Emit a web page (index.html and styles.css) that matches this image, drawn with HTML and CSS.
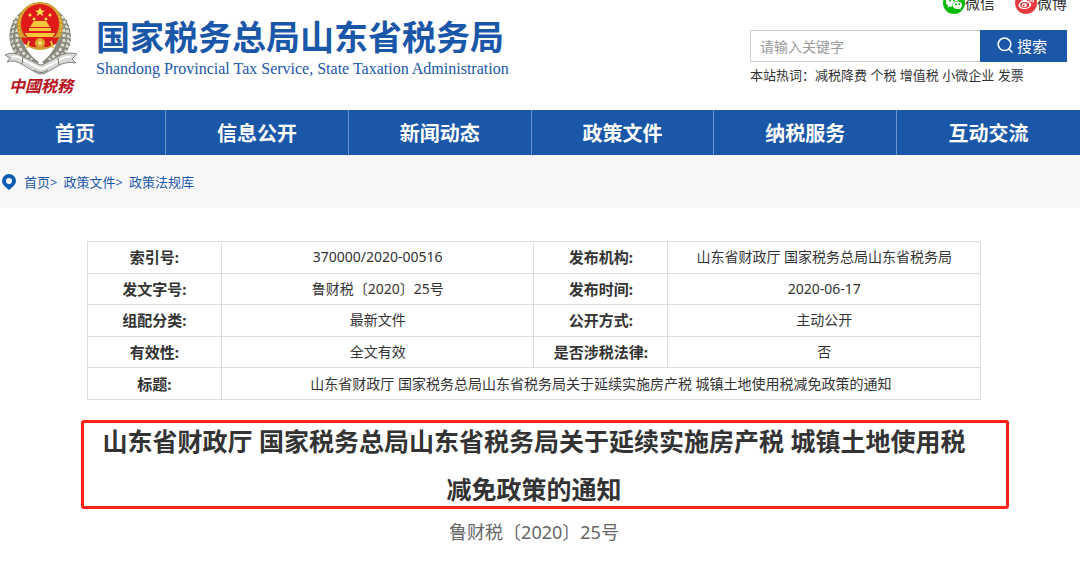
FILE: index.html
```html
<!DOCTYPE html>
<html lang="zh-CN">
<head>
    <meta charset="UTF-8">
    <meta name="viewport" content="width=device-width, initial-scale=1.0">
    <title>国家税务总局山东省税务局</title>
    <link rel="stylesheet" href="styles.css">
</head>
<body>
    <header class="header">
        <a class="brand" href="#">
            <span class="emblem">
                <svg class="emblem-img" viewBox="0 0 74 74" width="74" height="74" aria-hidden="true">
                    <!-- 麦穗 -->
                    <path d="M18 9C4 20 1 40 13 54L28 68L35 60C20 50 13 32 18 9Z" fill="#8b8a80"/>
                    <path d="M54 9C68 20 71 40 60 54L46 68L38 60C52 50 59 32 54 9Z" fill="#8b8a80"/>
                    <path d="M14 14L9 25L7 37L11 49L20 58L31 65M18 18L13 29L13 40L18 50L28 58" fill="none" stroke="#dedcd2" stroke-width="3" stroke-dasharray="3 2"/>
                    <path d="M58 14L63 25L65 37L62 49L53 58L42 65M55 18L60 29L60 40L55 50L45 58" fill="none" stroke="#dedcd2" stroke-width="3" stroke-dasharray="3 2"/>
                    <path d="M10 18L7 30L7 42L14 54M62 18L66 30L66 42L59 54" fill="none" stroke="#55544d" stroke-width="1" stroke-dasharray="2 3"/>
                    <!-- 国徽 -->
                    <ellipse cx="36" cy="24" rx="23" ry="24" fill="#c99a2b"/>
                    <ellipse cx="36" cy="24" rx="21" ry="22" fill="none" stroke="#f3d568" stroke-width="1" stroke-dasharray="2 2"/>
                    <ellipse cx="36" cy="22" rx="19" ry="20" fill="#e0191b"/>
                    <path d="M36 5L37.500 8.500H41L38.200 10.700L39.300 14.300L36 12.100L32.700 14.300L33.800 10.700L31 8.500H34.500Z" fill="#ffe14a"/>
                    <circle cx="26" cy="13" r="1.500" fill="#ffe14a"/>
                    <circle cx="46" cy="13" r="1.500" fill="#ffe14a"/>
                    <circle cx="30" cy="17" r="1.500" fill="#ffe14a"/>
                    <circle cx="42" cy="17" r="1.500" fill="#ffe14a"/>
                    <path d="M28 22L30 19H42L44 22L46 25H26ZM25 26H47V29H25ZM21 31H51L49 35H23Z" fill="#f5c63a"/>
                    <path d="M17 35Q36 40 55 35L52 42Q36 49 20 42Z" fill="#d81b1b"/>
                    <circle cx="36" cy="41" r="5" fill="#d9a72f"/>
                    <circle cx="36" cy="41" r="2" fill="#f7dc72"/>
                    <path d="M25 39L23 46M47 39L49 46" stroke="#edc348" stroke-width="2"/>
                    <!-- 绶带 -->
                    <path d="M1 53Q9 49 18 54L34 62Q37 64 40 62L53 55Q63 49 73 52L68 57L72 61Q62 59 54 64L43 70Q37 74 31 70L19 63Q10 57 3 60L6 56Z" fill="#d7d7d5" stroke="#85857f" stroke-width="1"/>
                    <path d="M8 55Q14 53 21 59L35 66Q37 67 40 66L54 59Q61 54 67 55" fill="none" stroke="#fff" stroke-width="2"/>
                    <path d="M19 55L18 62M54 56L55 63M30 68Q37 73 44 68" fill="none" stroke="#77776f" stroke-width="1"/>
                </svg>
                <span class="emblem-text">中國税務</span>
            </span>
            <span class="brand-names">
                <span class="brand-cn">国家税务总局山东省税务局</span>
                <span class="brand-en">Shandong Provincial Tax Service, State Taxation Administration</span>
            </span>
        </a>

        <div class="tools">
            <div class="social">
                <a href="#">
                    <svg viewBox="0 0 22 22" width="22" height="22" aria-hidden="true">
                        <circle cx="11" cy="11" r="11" fill="#09bb07"/>
                        <path d="M9 5C5.500 5 3 7 3 10C3 11.600 3.800 12.800 5 13.700L4.500 15.500L6.800 14.400L9 14.700C9 11 11.500 9 15 9C14.500 6.500 12 5 9 5Z" fill="#fff"/>
                        <path d="M14.500 9.500C11.500 9.500 9.500 11.300 9.500 13.300S11.500 17 14.500 17L16 16.800L18 17.800L17.500 16.200C18.500 15.400 19.200 14.500 19.200 13.300C19.200 11.200 17 9.500 14.500 9.500Z" fill="#fff"/>
                        <g fill="#09bb07"><circle cx="7" cy="8.500" r="1"/><circle cx="11" cy="8.500" r="1"/><circle cx="13" cy="12.300" r="1"/><circle cx="16.200" cy="12.300" r="1"/></g>
                    </svg>微信</a>
                <a href="#">
                    <svg viewBox="0 0 22 22" width="22" height="22" aria-hidden="true">
                        <circle cx="11" cy="11" r="11" fill="#e6393d"/>
                        <path d="M9.500 7.500C11 6.800 12.200 7.300 11.800 9C14 8.300 15 9 14.500 10.500C16 11 16.500 12 16 13.500C15.300 15.700 12.500 17 9.500 17C6 17 3.500 15.500 3.500 13.200C3.500 11 6.500 8.300 9.500 7.500Z" fill="#fff"/>
                        <ellipse cx="9.700" cy="13" rx="4.600" ry="3" fill="#e6393d"/>
                        <ellipse cx="9.400" cy="13.100" rx="2.600" ry="2.200" fill="#fff"/>
                        <circle cx="8.800" cy="13.500" r="1" fill="#e6393d"/>
                        <path d="M13.500 5C17 4.500 19 7 18 10M13.800 7.300C15.400 7 16.300 8.200 15.900 9.500" fill="none" stroke="#fff" stroke-width="1.300" stroke-linecap="round"/>
                    </svg>微博</a>
            </div>
            <form class="search">
                <input class="search-input" type="text" placeholder="请输入关键字" aria-label="请输入关键字">
                <button class="search-btn" type="button">
                    <svg viewBox="0 0 16 16" width="16" height="16" fill="none" stroke="#fff" stroke-width="1.500" stroke-linecap="round" aria-hidden="true">
                        <circle cx="7.500" cy="7.300" r="6.300"/>
                        <path d="M12 12L15 15"/>
                    </svg>搜索</button>
            </form>
            <p class="hot">本站热词：<a href="#">减税降费</a> <a href="#">个税</a> <a href="#">增值税</a> <a href="#">小微企业</a> <a href="#">发票</a></p>
        </div>
    </header>

    <nav class="nav">
        <a class="nav-home" href="#">首页</a>
        <a href="#">信息公开</a>
        <a href="#">新闻动态</a>
        <a href="#">政策文件</a>
        <a href="#">纳税服务</a>
        <a href="#">互动交流</a>
    </nav>

    <div class="crumbs">
        <svg viewBox="0 0 14 16" width="14" height="16" aria-hidden="true">
            <path fill="#0b5cb3" fill-rule="evenodd" d="M7 0A7 7 0 0 0 0 7C0 10.500 3.500 13 7 16C10.500 13 14 10.500 14 7A7 7 0 0 0 7 0ZM7 4A3 3 0 1 1 7 10A3 3 0 1 1 7 4Z"/>
        </svg>
        <span><a href="#">首页</a>&gt;</span>
        <span><a href="#">政策文件</a>&gt;</span>
        <a href="#">政策法规库</a>
    </div>

    <main class="article">
        <table class="info">
            <tr>
                <th scope="row">索引号:</th>
                <td>370000/2020-00516</td>
                <th scope="row">发布机构:</th>
                <td>山东省财政厅 国家税务总局山东省税务局</td>
            </tr>
            <tr>
                <th scope="row">发文字号:</th>
                <td>鲁财税〔2020〕25号</td>
                <th scope="row">发布时间:</th>
                <td>2020-06-17</td>
            </tr>
            <tr>
                <th scope="row">组配分类:</th>
                <td>最新文件</td>
                <th scope="row">公开方式:</th>
                <td>主动公开</td>
            </tr>
            <tr>
                <th scope="row">有效性:</th>
                <td>全文有效</td>
                <th scope="row">是否涉税法律:</th>
                <td>否</td>
            </tr>
            <tr>
                <th scope="row">标题:</th>
                <td colspan="3">山东省财政厅 国家税务总局山东省税务局关于延续实施房产税 城镇土地使用税减免政策的通知</td>
            </tr>
        </table>

        <h1 class="title">山东省财政厅 国家税务总局山东省税务局关于延续实施房产税 城镇土地使用税减免政策的通知</h1>
        <p class="doc-no">鲁财税〔2020〕25号</p>
    </main>
</body>
</html>
```
FILE: styles.css
```css
* {
    box-sizing: border-box;
}

body {
    margin: 0;
    font-family: "Noto Sans", "Noto Sans CJK SC", sans-serif;
    font-size: 14px;
    color: #333;
    background-color: #fff;
}

a {
    color: inherit;
    text-decoration: none;
}

p {
    margin: 0;
}

/* 页头 */
.header {
    display: flex;
    justify-content: space-between;
    height: 110px;
    padding: 0 13px 0 4px;
}

.brand {
    display: flex;
    gap: 18px;
    color: #1b57a8;
}

.emblem {
    display: flex;
    flex-direction: column;
    align-items: center;
    padding-top: 2px;
}

.emblem-img {
    display: block;
}

.emblem-text {
    font-family: "Noto Sans CJK SC", sans-serif;
    font-size: 16px;
    font-weight: bold;
    font-style: italic;
    line-height: 18px;
    color: #b5121b;
}

.brand-names {
    display: flex;
    flex-direction: column;
    padding-top: 16px;
}

.brand-cn {
    font-family: "Noto Sans CJK SC", sans-serif;
    font-size: 34px;
    font-weight: bold;
    line-height: 40px;
}

.brand-en {
    font-family: "Liberation Serif", serif;
    font-size: 16px;
    line-height: 26px;
}

.tools {
    width: 317px;
}

.social {
    display: flex;
    justify-content: flex-end;
    gap: 20px;
    margin-top: -8px;
    font-size: 15px;
    line-height: 22px;
}

.social a {
    display: flex;
}

.search {
    display: flex;
    height: 32px;
    margin-top: 16px;
}

.search-input {
    flex: 1;
    min-width: 0;
    padding: 0 9px;
    border: 1px solid #ccc;
    border-right: none;
    font-family: inherit;
    font-size: 14px;
}

.search-input::placeholder {
    color: #999;
}

.search-btn {
    display: flex;
    align-items: center;
    justify-content: center;
    gap: 4px;
    width: 87px;
    padding: 0 3px 2px 0;
    border: none;
    background-color: #1b57a8;
    color: #fff;
    font-family: inherit;
    font-size: 15px;
    cursor: pointer;
}

.hot {
    font-size: 13px;
    line-height: 26px;
    white-space: nowrap;
}

/* 导航 */
.nav {
    display: grid;
    grid-template-columns: 166px repeat(5, 1fr);
    background-color: #1b57a8;
}

.nav a {
    padding-top: 3px;
    border-right: 1px solid #6c93c8;
    color: #fff;
    font-size: 20px;
    font-weight: bold;
    line-height: 42px;
    text-align: center;
}

.nav .nav-home {
    padding-right: 15px;
}

.nav a:last-child {
    border-right: none;
}

.crumbs {
    display: flex;
    align-items: center;
    gap: 6px;
    height: 53px;
    padding: 0 2px;
    background-color: #f7f7f7;
    color: #1b57a8;
    font-size: 13px;
}

.crumbs svg {
    margin-right: 2px;
}

/* 正文 */
.article {
    padding: 33px 99px 0 87px;
}

.info {
    width: 100%;
    height: 159px;
    table-layout: fixed;
    border-collapse: collapse;
}

.info th,
.info td {
    padding: 0;
    border: 1px solid #ddd;
    line-height: 20px;
    text-align: center;
}

.info th {
    width: 15%;
    font-size: 15px;
}

.info td {
    width: 35%;
}

.title {
    position: relative;
    margin: 17px 0 0;
    padding: 0 8px;
    font-size: 25px;
    line-height: 48px;
    text-align: center;
}

/* 红框标注 */
.title::after {
    content: "";
    position: absolute;
    top: 3px;
    right: -28px;
    bottom: 4px;
    left: -6px;
    border: 3px solid #fc2314;
    border-radius: 3px;
}

.doc-no {
    color: #666;
    font-size: 18px;
    line-height: 38px;
    text-align: center;
}
```
